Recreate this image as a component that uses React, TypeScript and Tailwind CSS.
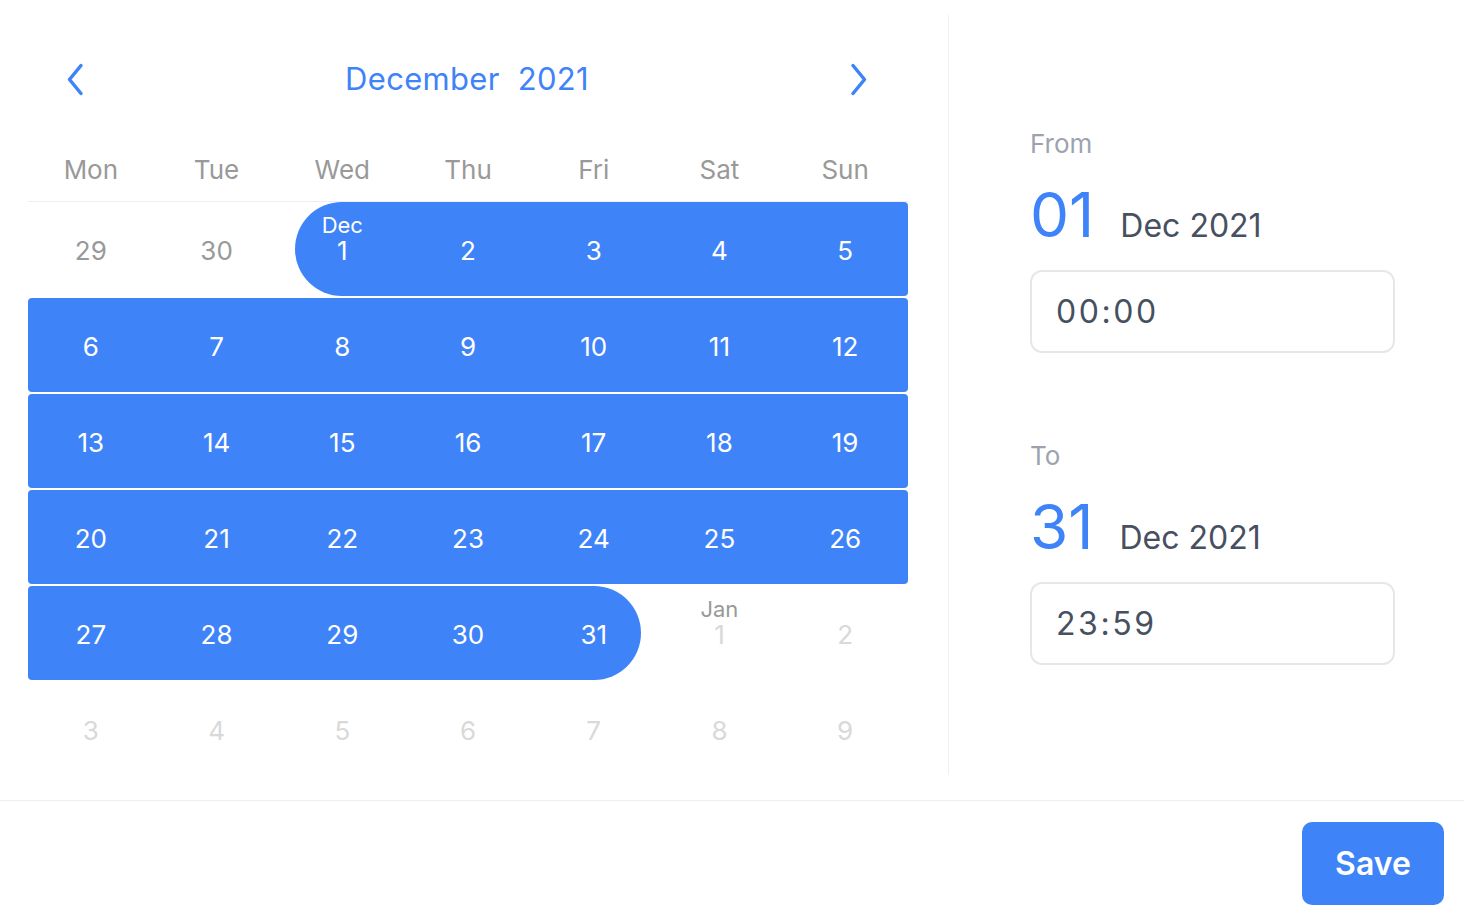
import React from 'react';

type Day = {
  n: number;
  label?: string;
  tone: 'prev' | 'in' | 'next';
  start?: boolean;
  end?: boolean;
};

const weekdays = ['Mon', 'Tue', 'Wed', 'Thu', 'Fri', 'Sat', 'Sun'];

// build the 6 weeks shown for December 2021
const buildWeeks = (): Day[][] => {
  const days: Day[] = [
    { n: 29, tone: 'prev' },
    { n: 30, tone: 'prev' },
  ];
  for (let d = 1; d <= 31; d++) {
    days.push({
      n: d,
      tone: 'in',
      label: d === 1 ? 'Dec' : undefined,
      start: d === 1,
      end: d === 31,
    });
  }
  for (let d = 1; d <= 9; d++) {
    days.push({ n: d, tone: 'next', label: d === 1 ? 'Jan' : undefined });
  }
  const weeks: Day[][] = [];
  for (let i = 0; i < days.length; i += 7) weeks.push(days.slice(i, i + 7));
  return weeks;
};

const ChevronLeft = () => (
  <svg width="18" height="33" viewBox="0 0 18 33" fill="none">
    <path d="M15 2.5 L3.5 16.5 L15 30.5" stroke="#3f83f8" strokeWidth="3.5" strokeLinecap="round" strokeLinejoin="round" />
  </svg>
);

const ChevronRight = () => (
  <svg width="18" height="33" viewBox="0 0 18 33" fill="none">
    <path d="M3 2.5 L14.5 16.5 L3 30.5" stroke="#3f83f8" strokeWidth="3.5" strokeLinecap="round" strokeLinejoin="round" />
  </svg>
);

const DayCell: React.FC<{ day: Day; col: number }> = ({ day, col }) => {
  const inRange = day.tone === 'in';
  const numColor =
    day.tone === 'in' ? 'text-white' : day.tone === 'prev' ? 'text-[#999999]' : 'text-[#d9d9d9]';
  const labelColor = day.tone === 'in' ? 'text-white' : 'text-[#999999]';

  let band = '';
  if (inRange) {
    band = 'bg-[#3f83f8]';
    if (day.start) band += ' ml-[16px] pr-[16px] rounded-l-full';
    if (day.end) band += ' mr-[16px] pl-[16px] rounded-r-full';
    if (col === 0 && !day.start) band += ' rounded-l-[4px]';
    if (col === 6 && !day.end) band += ' rounded-r-[4px]';
  }

  return (
    <div className="h-[96px] pb-[2px] flex">
      <div className={`flex-1 h-[94px] pt-[3px] flex flex-col items-center justify-center ${band}`}>
        <div className={`h-[22px] text-[22px] leading-[22px] ${labelColor}`}>{day.label}</div>
        <div className={`h-[30px] text-[26px] leading-[30px] ${numColor}`}>{day.n}</div>
        <div className="h-[22px]" />
      </div>
    </div>
  );
};

const TimeBlock: React.FC<{ label: string; day: string; time: string; className?: string }> = ({
  label,
  day,
  time,
  className,
}) => (
  <div className={className}>
    <div className="text-[26px] leading-[32px] text-[#9ca3af]">{label}</div>
    <div className="mt-[24px] flex items-baseline gap-[26px]">
      <span className="text-[62px] leading-[62px] text-[#3f83f8]">{day}</span>
      <span className="text-[32px] leading-[40px] text-[#475060]">Dec 2021</span>
    </div>
    <div className="mt-[24px] w-[365px] h-[83px] rounded-[12px] border-2 border-[#e5e7eb] flex items-center pl-[24px]">
      <span className="text-[32px] tracking-[0.08em] text-[#475060]">{time}</span>
    </div>
  </div>
);

export default function App() {
  const weeks = buildWeeks();

  return (
    <div className="w-[1464px] h-[920px] bg-white flex flex-col font-['Inter','Liberation_Sans',sans-serif]">
      <div className="h-[801px] flex border-b border-[#eeeeee]">
        {/* Calendar */}
        <div className="w-[948px] pl-[28px] pr-[40px]">
          <div className="mt-[48px] h-[62px] flex items-center justify-between pl-[38px] pr-[40px]">
            <ChevronLeft />
            <div className="text-[31px] tracking-[0.01em] text-[#3f83f8] whitespace-pre">December  2021</div>
            <ChevronRight />
          </div>
          <div className="mt-[30px] h-[62px] grid grid-cols-7 items-center border-b border-[#eeeeee]">
            {weekdays.map((w) => (
              <div key={w} className="text-center text-[26px] text-[#999999] pb-[2px]">
                {w}
              </div>
            ))}
          </div>
          <div className="grid grid-cols-7">
            {weeks.map((week, wi) =>
              week.map((day, col) => <DayCell key={`${wi}-${col}`} day={day} col={col} />)
            )}
          </div>
        </div>

        <div className="w-px bg-[#f0f0f0] mt-[15px] h-[760px]" />

        {/* From / To */}
        <div className="flex-1 pl-[81px] pt-[128px]">
          <TimeBlock label="From" day="01" time="00:00" />
          <TimeBlock label="To" day="31" time="23:59" className="mt-[87px]" />
        </div>
      </div>

      <div className="flex-1 flex justify-end items-start pt-[21px] pr-[20px]">
        <button className="w-[142px] h-[83px] rounded-[10px] bg-[#3f83f8] text-white text-[32px] font-semibold">
          Save
        </button>
      </div>
    </div>
  );
}
